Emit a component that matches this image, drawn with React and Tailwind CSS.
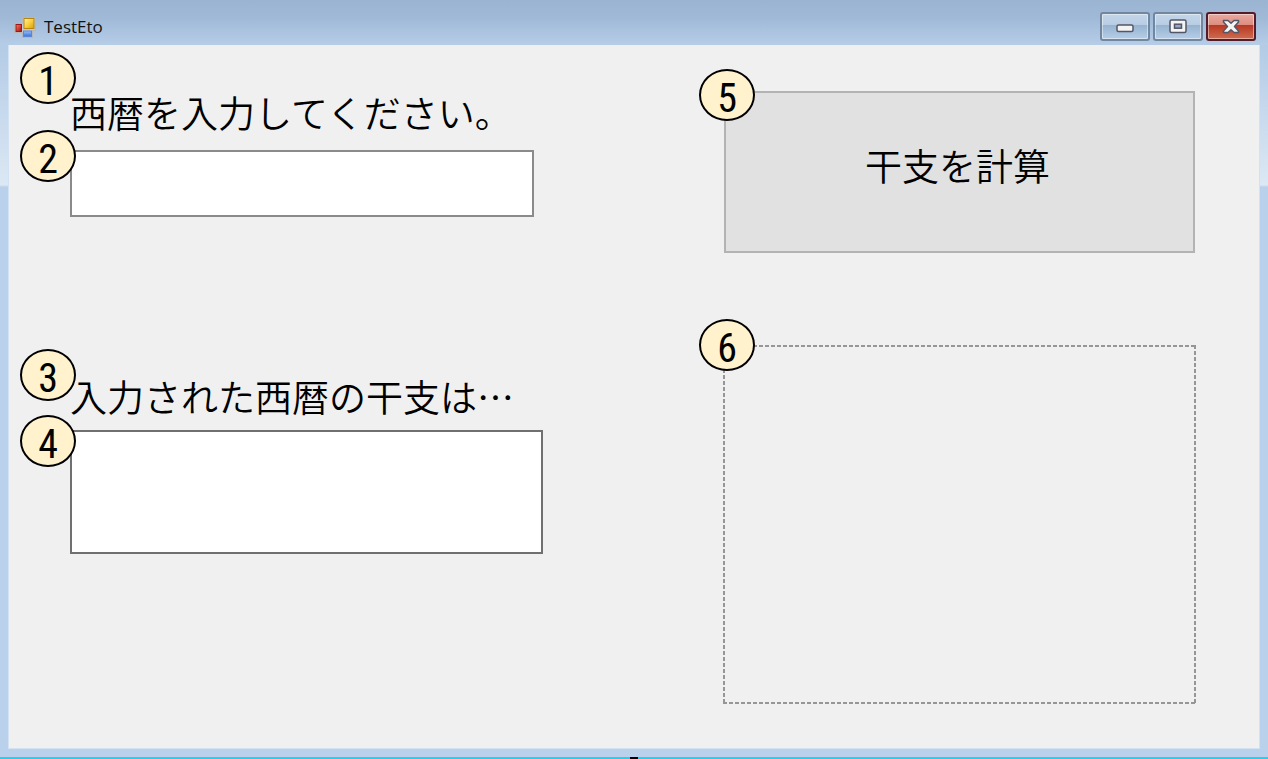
import React from "react";

function Badge({ children, className }) {
  return (
    <span
      aria-hidden="true"
      className={`absolute z-10 flex h-[52px] w-[56px] items-center justify-center rounded-[50%] border-2 border-black bg-[#fff2cc] pt-2 font-['Roboto_Condensed','Roboto',sans-serif] text-[40px] leading-none text-black ${className}`}
    >
      {children}
    </span>
  );
}

function AppIcon() {
  return (
    <svg className="h-[21px] w-[22px]" viewBox="0 0 22 21" aria-hidden="true">
      <defs>
        <linearGradient id="gold" x1="0" y1="0" x2="1" y2="1">
          <stop offset="0" stopColor="#fff0a0" />
          <stop offset="0.5" stopColor="#fbcf3c" />
          <stop offset="1" stopColor="#d89a08" />
        </linearGradient>
        <linearGradient id="red" x1="0" y1="0" x2="1" y2="1">
          <stop offset="0" stopColor="#f0806a" />
          <stop offset="1" stopColor="#a80808" />
        </linearGradient>
        <linearGradient id="blue" x1="0" y1="0" x2="0" y2="1">
          <stop offset="0" stopColor="#98c0fa" />
          <stop offset="1" stopColor="#3a70dc" />
        </linearGradient>
      </defs>
      <path d="M8.500 6.500H.5V15.500H8.500V20.500H18.500V13.500H21.500V.5H8.500Z" fill="#c3cbd4" stroke="#b5b7b8" />
      <rect x="10" y="1.500" width="10" height="10" fill="url(#gold)" stroke="#b8860f" />
      <rect x="2" y="7.500" width="5.500" height="7" fill="url(#red)" stroke="#a31414" />
      <rect x="9.500" y="14" width="8" height="5.500" fill="url(#blue)" stroke="#5a86d6" />
    </svg>
  );
}

const captionButton =
  "flex h-[29px] w-[50px] items-center justify-center rounded-[3px] border-2 shadow-[inset_0_0_0_1px_rgba(255,255,255,0.45)]";
const plainCaption = "border-[#71869f] bg-[linear-gradient(#c3d5e9_0%,#b8cce3_45%,#98b3d0_46%,#b5cee8_100%)]";

function TitleBar() {
  return (
    <header className="flex h-[45px] items-start justify-between bg-[linear-gradient(#9ab4d2_0%,#9fb9d7_40%,#b6cde7_100%)] pr-3 pl-[14px]">
      <div className="flex items-center gap-2 pt-[15px]">
        <AppIcon />
        <h1 className="font-['Open_Sans','Noto_Sans',sans-serif] text-[17px] leading-6 text-[#111]">TestEto</h1>
      </div>
      <div className="flex gap-[3px] pt-3">
        <button type="button" aria-label="最小化" className={`${captionButton} ${plainCaption}`}>
          <svg className="h-4 w-6" viewBox="0 0 24 16" aria-hidden="true">
            <rect x="4" y="6" width="16" height="6.500" rx="1.500" fill="#f4f4f4" stroke="#535666" strokeWidth="1.500" />
          </svg>
        </button>
        <button type="button" aria-label="最大化" className={`${captionButton} ${plainCaption}`}>
          <svg className="h-4 w-6" viewBox="0 0 24 16" aria-hidden="true">
            <rect x="4" y="1" width="16" height="12.500" rx="1.500" fill="#f4f4f4" stroke="#535666" strokeWidth="1.500" />
            <rect x="8.500" y="5.200" width="7" height="4" fill="#8fa9c6" stroke="#535666" strokeWidth="1.500" />
          </svg>
        </button>
        <button
          type="button"
          aria-label="閉じる"
          className={`${captionButton} border-[#541c28] bg-[linear-gradient(#e9a99f_0%,#dc8b7e_45%,#b83a22_46%,#d06a50_100%)]`}
        >
          <svg className="h-4 w-6" viewBox="0 0 24 16" aria-hidden="true">
            <path
              d="M4.500 1.500H9L12 4.200L15 1.500H19.500V3L15.500 7.500L19.500 12V13.500H15L12 10.800L9 13.500H4.500V12L8.500 7.500L4.500 3Z"
              fill="#f4f4f4"
              stroke="#535666"
              strokeWidth="1.500"
              strokeLinejoin="round"
            />
          </svg>
        </button>
      </div>
    </header>
  );
}

const labelText = "block whitespace-nowrap text-[37px] leading-[42px] font-[350]";

export default function App() {
  return (
    <div className="flex min-h-screen flex-col font-['Noto_Sans_CJK_JP',sans-serif] text-black">
      <TitleBar />
      <div className="flex grow bg-[linear-gradient(#b3cbe6_0px,#dce8f4_140px,#b9d1ea_142px,#b9d1ea_100%)] px-2 pb-2">
        <main className="grid grow grid-cols-[653fr_473fr] grid-rows-[162px_359px] content-start gap-y-[92px] border-x border-b border-[#d3e2f3] bg-[#f0f0f0] pt-[46px] pr-[63px] pb-[44px] pl-[61px]">
          <section>
            <div className="relative">
              <Badge className="-top-[39px] -left-[50px]">1</Badge>
              <label htmlFor="year" className={labelText}>
                西暦を入力してください。
              </label>
            </div>
            <div className="relative mt-[17px]">
              <Badge className="-top-[20px] -left-[50px]">2</Badge>
              <input
                id="year"
                type="text"
                className="block h-[67px] w-[464px] max-w-full border-2 border-[#8a8a8a] bg-white px-2 text-[37px] outline-none"
              />
            </div>
          </section>

          <div className="relative mx-px">
            <Badge className="-top-[22px] -left-[25px]">5</Badge>
            <button
              type="button"
              className="h-full w-full border-2 border-[#b3b3b3] bg-[#e1e1e1] pr-1 pb-3 text-[37px] font-[350]"
            >
              干支を計算
            </button>
          </div>

          <section className="pt-[30px]">
            <div className="relative">
              <Badge className="-top-[26px] -left-[50px]">3</Badge>
              <label htmlFor="result" className={labelText}>
                入力された西暦の干支は…
              </label>
            </div>
            <div className="relative mt-[13px]">
              <Badge className="-top-[15px] -left-[50px]">4</Badge>
              <textarea
                id="result"
                readOnly
                className="block h-[124px] w-[473px] max-w-full resize-none border-2 border-[#707070] bg-white px-2 text-[37px] outline-none"
              />
            </div>
          </section>

          <div className="relative">
            <Badge className="-top-[26px] -left-[24px]">6</Badge>
            <div className="h-full w-full bg-no-repeat [background-image:repeating-linear-gradient(90deg,#969696_0px_4px,transparent_4px_6px),repeating-linear-gradient(90deg,#969696_0px_4px,transparent_4px_6px),repeating-linear-gradient(180deg,#969696_0px_4px,transparent_4px_6px),repeating-linear-gradient(180deg,#969696_0px_4px,transparent_4px_6px)] [background-position:0_0,0_100%,0_0,100%_0] [background-size:100%_2px,100%_2px,2px_100%,2px_100%]" />
          </div>
        </main>
      </div>
      <div className="flex h-0.5 justify-center bg-[#1fd3ee]">
        <span className="w-2 bg-black" />
      </div>
    </div>
  );
}
